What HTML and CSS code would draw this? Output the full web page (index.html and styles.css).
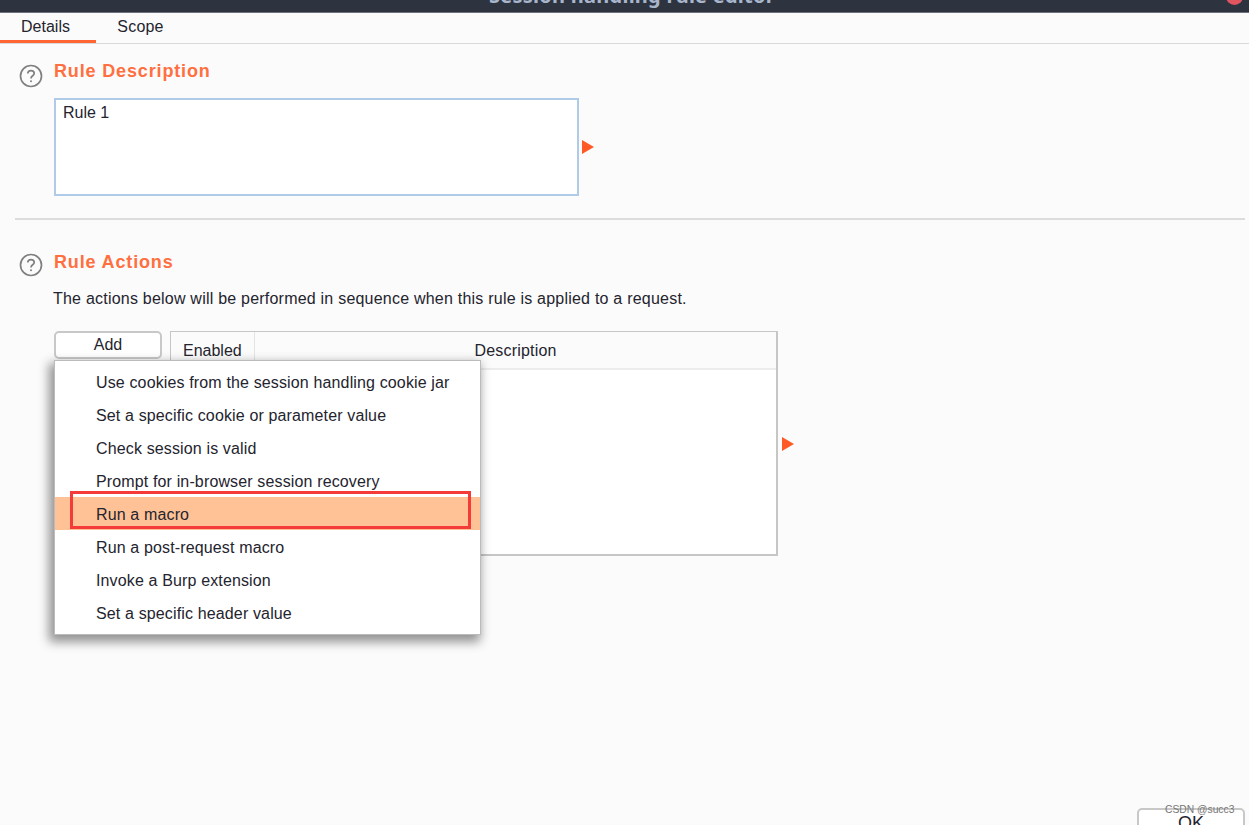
FILE: index.html
```html
<!DOCTYPE html>
<html lang="en">
<head>
<meta charset="utf-8">
<title>Session handling rule editor</title>
<link rel="stylesheet" href="styles.css">
</head>
<body>
<div class="window">
  <header class="titlebar">
    <span class="title">Session handling rule editor</span>
    <span class="close"></span>
  </header>
  <nav class="tabs">
    <a class="tab tab-active">Details</a>
    <a class="tab">Scope</a>
  </nav>

  <section class="section section-desc">
    <svg class="help" viewBox="0 0 24 24" aria-hidden="true">
      <circle cx="12" cy="12" r="10.5"/>
      <path d="M8.8 9.6c0-1.9 1.4-3 3.2-3s3.2 1.1 3.2 2.8c0 2.4-3.2 2.4-3.2 5"/>
      <circle class="dot" cx="12" cy="17.2" r="1"/>
    </svg>
    <div class="section-body">
      <h2 class="heading">Rule Description</h2>
      <div class="field-row">
        <div class="textbox">Rule 1</div>
        <span class="arrow arrow-desc"></span>
      </div>
    </div>
  </section>

  <hr class="divider">

  <section class="section section-actions">
    <svg class="help" viewBox="0 0 24 24" aria-hidden="true">
      <circle cx="12" cy="12" r="10.5"/>
      <path d="M8.8 9.6c0-1.9 1.4-3 3.2-3s3.2 1.1 3.2 2.8c0 2.4-3.2 2.4-3.2 5"/>
      <circle class="dot" cx="12" cy="17.2" r="1"/>
    </svg>
    <div class="section-body">
      <h2 class="heading">Rule Actions</h2>
      <p class="intro">The actions below will be performed in sequence when this rule is applied to a request.</p>
      <div class="actions-row">
        <button class="btn btn-add">Add</button>
        <div class="table">
          <div class="table-head">
            <div class="col-enabled">Enabled</div>
            <div class="col-desc">Description</div>
          </div>
        </div>
        <span class="arrow arrow-table"></span>
        <ul class="menu">
          <li>Use cookies from the session handling cookie jar</li>
          <li>Set a specific cookie or parameter value</li>
          <li>Check session is valid</li>
          <li>Prompt for in-browser session recovery</li>
          <li class="selected">Run a macro<span class="callout"></span></li>
          <li>Run a post-request macro</li>
          <li>Invoke a Burp extension</li>
          <li>Set a specific header value</li>
        </ul>
      </div>
    </div>
  </section>

  <footer class="footer">
    <button class="btn btn-ok">OK</button>
  </footer>
  <span class="watermark">CSDN @succ3</span>
</div>
</body>
</html>
```

FILE: styles.css
```css
* { box-sizing: border-box; }

html, body {
  margin: 0;
  height: 100%;
  overflow: hidden;
}

body {
  background: #fbfbfb;
  color: #24242e;
  font-family: "Liberation Sans", Arial, sans-serif;
  font-size: 16px;
}

.window {
  position: relative;
  display: flex;
  flex-direction: column;
  height: 825px;
  overflow: hidden;
}

/* Title bar, mostly scrolled out of the visible area */
.titlebar {
  position: relative;
  flex: none;
  height: 13px;
  display: flex;
  justify-content: center;
  align-items: flex-end;
  padding: 0 0 5px 15px;
  background: #2e3340;
  border-bottom: 1px solid #6d717b;
  overflow: hidden;
}

.title {
  color: #a8b6cc;
  font-family: "Noto Sans", sans-serif;
  font-size: 20px;
  font-weight: 700;
  letter-spacing: 0.25px;
  line-height: 22px;
  white-space: nowrap;
}

.close {
  position: absolute;
  top: -12px;
  left: 1226px;
  width: 17px;
  height: 17px;
  border-radius: 50%;
  background: #e0555f;
}

/* Tabs */
.tabs {
  flex: none;
  display: flex;
  height: 31px;
  border-bottom: 1px solid #d9d9d9;
}

.tab {
  width: 96px;
  height: 30px;
  padding-top: 5px;
  text-align: center;
  line-height: 18px;
}

.tab + .tab {
  width: 89px;
  letter-spacing: 0.2px;
}

.tab-active {
  padding-right: 5px;
  border-bottom: 3px solid #ff6633;
}

/* Sections */
.section {
  flex: none;
  display: flex;
  padding-left: 19px;
}

.section-desc { padding-top: 17px; }

.section-actions { padding-top: 32px; }

.section-body {
  flex: 1;
  margin-left: 11px;
}

.help {
  flex: none;
  width: 24px;
  height: 24px;
  margin-top: 3px;
  fill: none;
  stroke: #808080;
  stroke-width: 1.7;
}

.section-actions .help { margin-top: 1px; }

.help .dot { fill: #808080; stroke: none; }

.heading {
  margin: 0;
  color: #ff6f40;
  font-size: 18px;
  font-weight: 700;
  letter-spacing: 0.85px;
  line-height: 20px;
}

.field-row {
  display: flex;
  align-items: center;
  margin-top: 17px;
}

.textbox {
  width: 525px;
  height: 98px;
  padding: 4px 7px;
  background: #fff;
  border: 2px solid #b0cbe8;
  line-height: 18px;
}

.arrow {
  flex: none;
  width: 0;
  height: 0;
  border-left: 12px solid #ff5a26;
  border-top: 7px solid transparent;
  border-bottom: 7px solid transparent;
}

.arrow-desc { margin-left: 3px; }

.divider {
  flex: none;
  width: 1230px;
  height: 2px;
  margin: 22px 0 0 15px;
  border: 0;
  background: #dcdcdc;
}

.intro {
  margin: 17px 0 0 -1px;
  line-height: 20px;
  letter-spacing: 0.22px;
}

/* Action table with the open Add menu */
.actions-row {
  position: relative;
  display: flex;
  align-items: flex-start;
  margin-top: 22px;
}

.btn {
  padding: 0;
  background: #fff;
  border: 2px solid #c8c8c8;
  border-radius: 5px;
  color: inherit;
  font: inherit;
}

.btn-add {
  flex: none;
  width: 108px;
  height: 28px;
  line-height: 22px;
}

.table {
  flex: none;
  width: 608px;
  height: 225px;
  margin-left: 8px;
  background: #fff;
  border: 2px solid #c6c6c6;
  border-width: 1px 2px 2px 1px;
}

.table-head {
  display: flex;
  height: 38px;
  border-bottom: 2px solid #ececec;
  line-height: 38px;
  background: #fbfbfb;
}

.col-enabled {
  width: 84px;
  padding-left: 12px;
  border-right: 1px solid #e4e4e4;
}

.col-desc {
  flex: 1;
  text-align: center;
  letter-spacing: 0.2px;
}

.arrow-table {
  margin: 106px 0 0 4px;
}

.menu {
  position: absolute;
  top: 30px;
  left: 1px;
  width: 425px;
  height: 273px;
  margin: 0;
  padding: 4px 0 5px;
  list-style: none;
  background: #fff;
  box-shadow: 0 0 0 1px #bbb, -3px 5px 10px 3px rgba(0, 0, 0, 0.42);
}

.menu li {
  position: relative;
  height: 33px;
  padding: 1px 0 0 41px;
  line-height: 33px;
  letter-spacing: 0.14px;
  white-space: nowrap;
}

.menu .selected { background: #ffc297; }

.callout {
  position: absolute;
  top: -6px;
  left: 15px;
  width: 401px;
  height: 38px;
  border: 3px solid #f53a3a;
}

/* Dialog footer, cut by the bottom edge */
.footer {
  flex: none;
  display: flex;
  justify-content: flex-end;
  margin-top: auto;
  padding-right: 4px;
  height: 17px;
}

.btn-ok {
  width: 108px;
  height: 30px;
  padding-top: 0;
  font-size: 18px;
  line-height: 20px;
  align-self: flex-start;
}

.watermark {
  position: absolute;
  left: 1165px;
  top: 803px;
  color: #777;
  font-size: 10.3px;
  line-height: 14px;
  white-space: nowrap;
}
```
